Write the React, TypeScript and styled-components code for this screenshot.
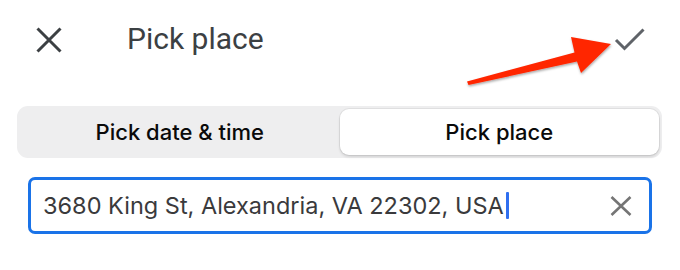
import * as React from 'react';
import styled, { createGlobalStyle } from 'styled-components';

const GlobalStyle = createGlobalStyle`
  html, body {
    margin: 0;
    padding: 0;
    background: #ffffff;
  }
  body {
    font-family: Roboto, "Liberation Sans", sans-serif;
  }
`;

const ADDRESS = '3680 King St, Alexandria, VA 22302, USA';

const App: React.FC = () => (
  <>
    <GlobalStyle />
    <Page>
      <Header>
        <IconButton aria-label="Close">
          <svg width="26" height="26" viewBox="0 0 26 26">
            <path d="M1.5 1.5 L24.5 24.5 M24.5 1.5 L1.5 24.5" stroke="#3c4043" strokeWidth="3" fill="none" />
          </svg>
        </IconButton>
        <Title>Pick place</Title>
        <Spacer />
        <ConfirmButton aria-label="Done">
          <svg width="32" height="26" viewBox="0 0 32 26">
            <path d="M2 12 L10.5 20.5 L29.5 1.5" stroke="#5f6368" strokeWidth="3" fill="none" />
          </svg>
        </ConfirmButton>
        <Annotation width="160" height="60" viewBox="460 30 160 60">
          <defs>
            <filter id="arrowShadow" x="-10%" y="-30%" width="120%" height="160%">
              <feDropShadow dx="0.5" dy="1.5" stdDeviation="1" floodColor="#000" floodOpacity="0.35" />
            </filter>
          </defs>
          <polygon
            points="467,81.5 468.5,85 577,61.5 581,73 611,44 571,37 574.5,52.5"
            fill="#ff2600"
            filter="url(#arrowShadow)"
          />
        </Annotation>
      </Header>

      <Segmented>
        <Segment>Pick date &amp; time</Segment>
        <Segment active>Pick place</Segment>
      </Segmented>

      <SearchField>
        <FieldText>
          {ADDRESS}
          <Caret />
        </FieldText>
        <ClearButton aria-label="Clear">
          <svg width="22" height="20" viewBox="0 0 22 20">
            <path d="M1.5 1 L20.5 19 M20.5 1 L1.5 19" stroke="#757575" strokeWidth="2.6" fill="none" />
          </svg>
        </ClearButton>
      </SearchField>
    </Page>
  </>
);

const Page = styled.div`
  width: 680px;
  height: 270px;
  display: flex;
  flex-direction: column;
  box-sizing: border-box;
`;

const Header = styled.div`
  position: relative;
  height: 80px;
  display: flex;
  align-items: center;
  padding: 0 34px 0 36px;
  box-sizing: border-box;
`;

const IconButton = styled.div`
  display: flex;
  align-items: center;
  justify-content: center;
  width: 26px;
  height: 26px;
`;

const Title = styled.div`
  margin-left: 65px;
  font-family: Roboto, "Liberation Sans", sans-serif;
  font-size: 30px;
  font-weight: 400;
  color: #3c4043;
  line-height: 1;
  padding-bottom: 2px;
`;

const Spacer = styled.div`
  flex: 1;
`;

const ConfirmButton = styled.div`
  display: flex;
  width: 32px;
  height: 26px;
  margin-top: 2px;
`;

const Annotation = styled.svg`
  position: absolute;
  left: 460px;
  top: 30px;
  overflow: visible;
  pointer-events: none;
`;

const Segmented = styled.div`
  margin: 26px 18px 0 17px;
  height: 52px;
  padding: 3px;
  box-sizing: border-box;
  background: #eeeeef;
  border-radius: 11px;
  display: grid;
  grid-template-columns: 1fr 1fr;
`;

const Segment = styled.div<{ active?: boolean }>`
  display: flex;
  align-items: center;
  justify-content: center;
  border-radius: 9px;
  font-family: Inter, "Noto Sans", sans-serif;
  font-size: 22px;
  font-weight: 500;
  color: #0a0a0a;
  background: ${p => (p.active ? '#ffffff' : 'transparent')};
  box-shadow: ${p => (p.active ? '0 0 0 1px rgba(0,0,0,0.06), 0 2px 3px rgba(0,0,0,0.12)' : 'none')};
`;

const SearchField = styled.div`
  margin: 19px 28px 0 28px;
  height: 57px;
  box-sizing: border-box;
  border: 3px solid #1a73e8;
  border-radius: 7px;
  display: flex;
  align-items: center;
  padding: 0 17px 0 12px;
`;

const FieldText = styled.div`
  flex: 1;
  display: flex;
  align-items: center;
  font-family: Inter, "Noto Sans", sans-serif;
  font-size: 23.5px;
  font-weight: 400;
  color: #3a3a3c;
  white-space: nowrap;
`;

const Caret = styled.span`
  display: inline-block;
  width: 3px;
  height: 27px;
  margin-left: 2px;
  background: #2f6ff0;
  border-radius: 1px;
`;

const ClearButton = styled.div`
  display: flex;
  width: 22px;
  height: 20px;
`;

export default App;
